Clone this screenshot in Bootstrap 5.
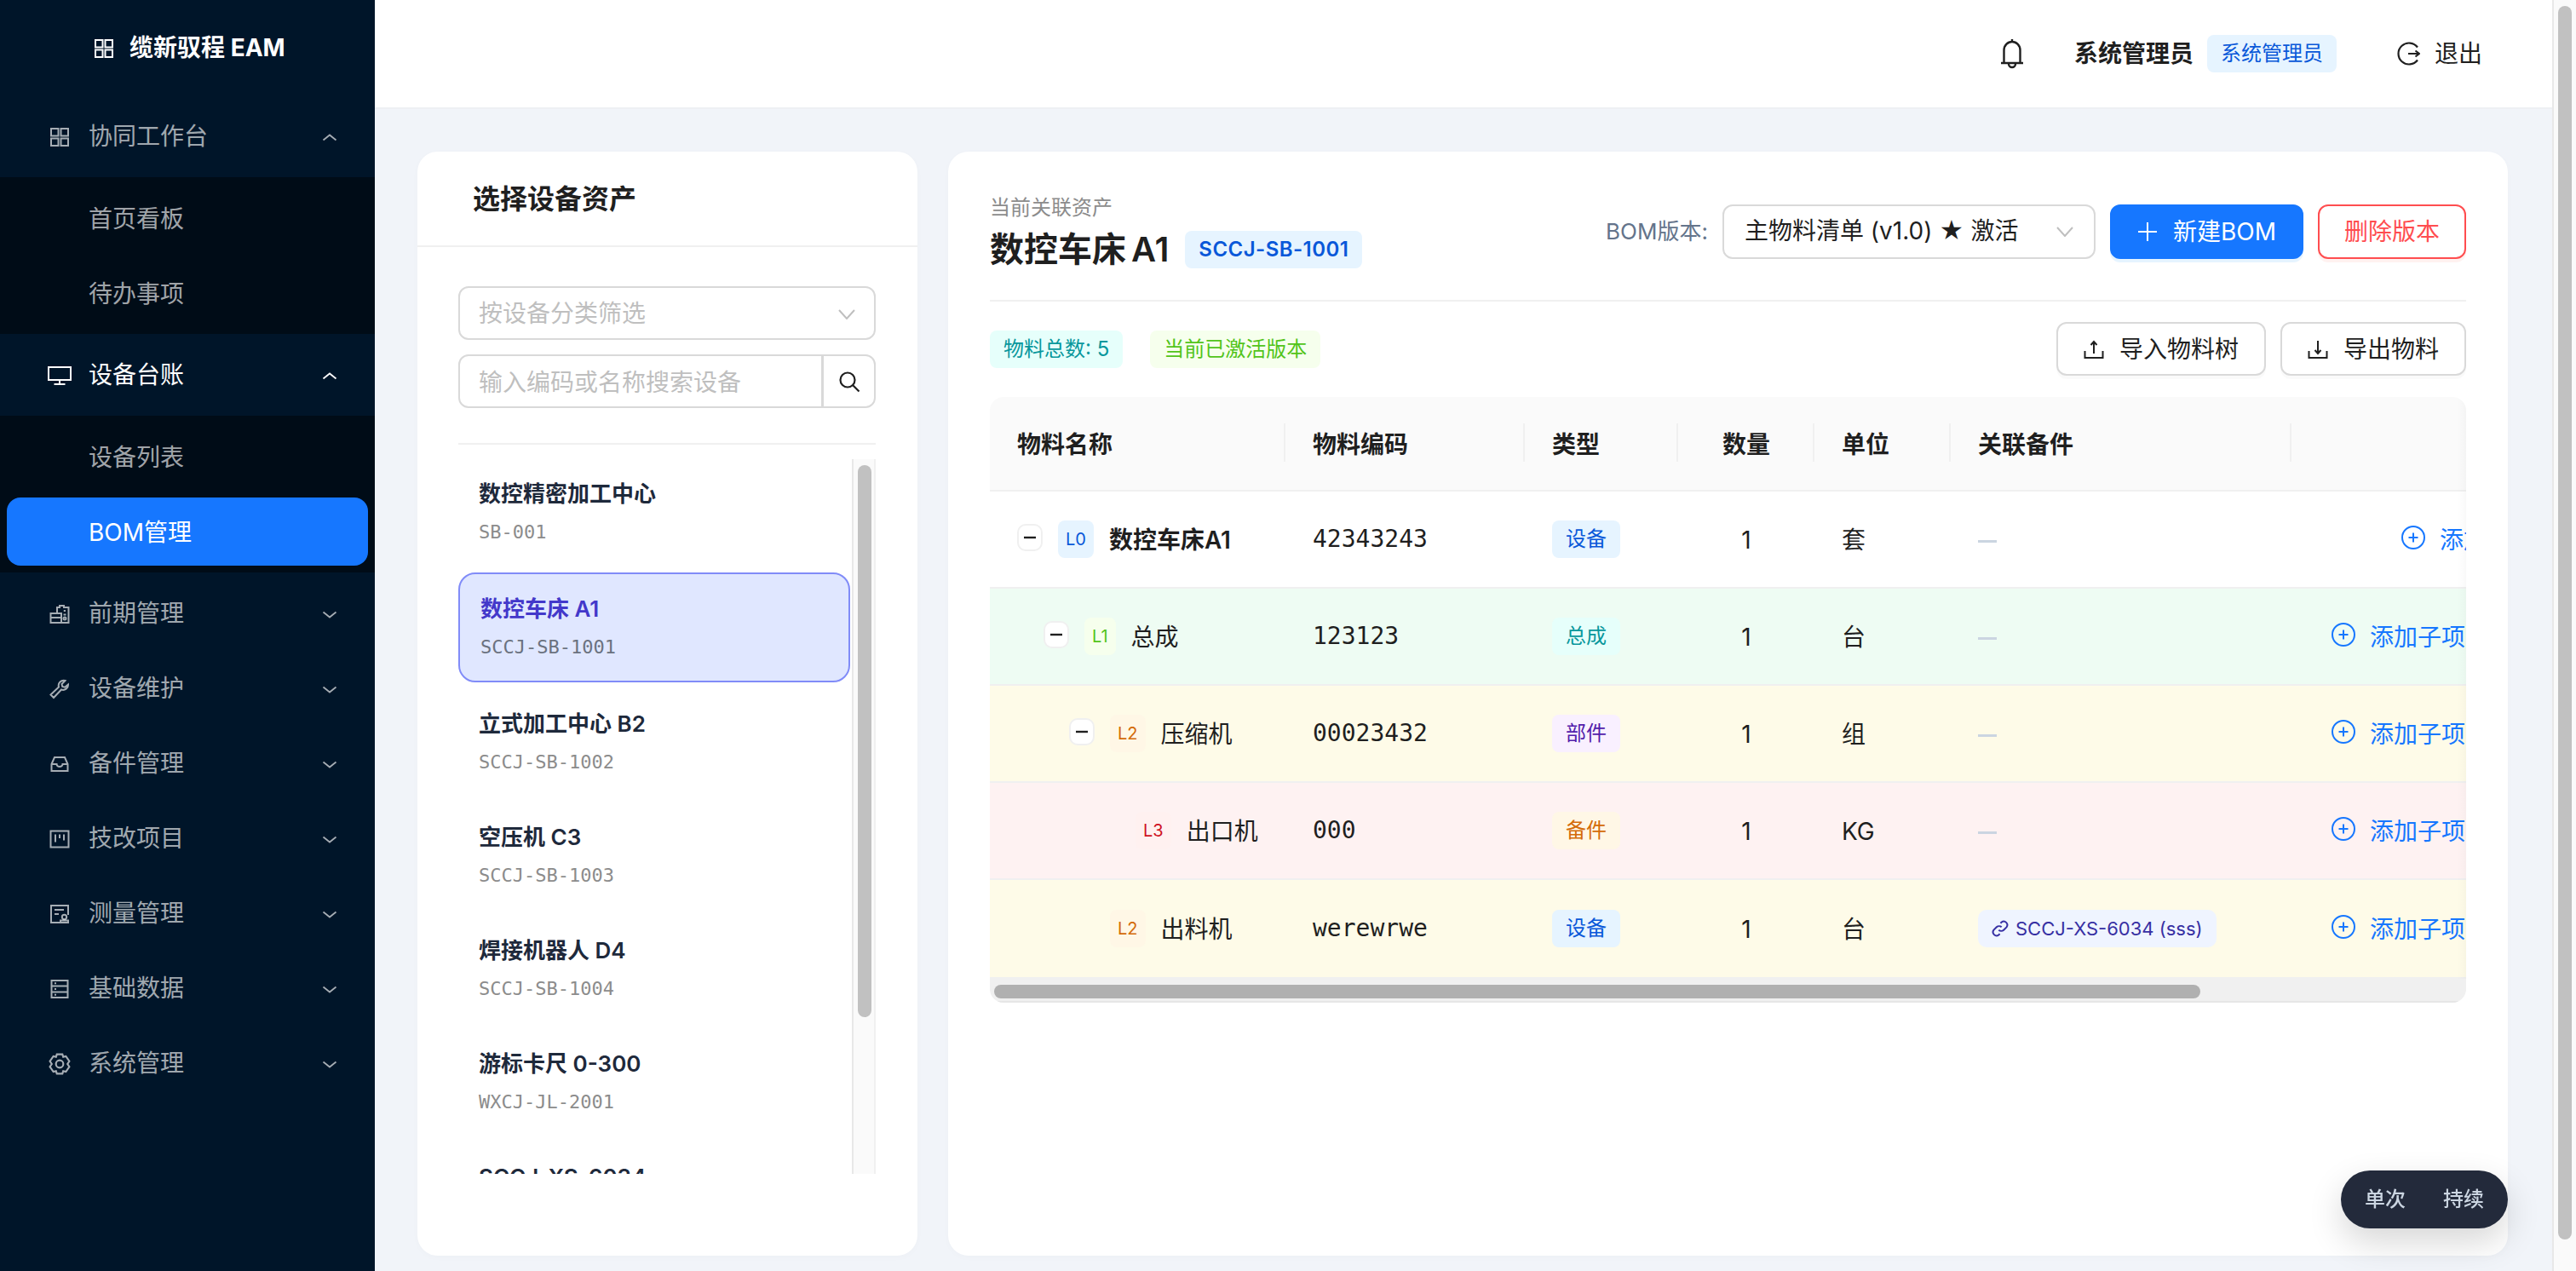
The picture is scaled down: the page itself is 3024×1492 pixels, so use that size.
<!DOCTYPE html>
<html lang="zh-CN">
<head>
<meta charset="utf-8">
<title>BOM管理</title>
<link href="https://cdn.jsdelivr.net/npm/bootstrap@5.3.0/dist/css/bootstrap.min.css" rel="stylesheet">
<style>
html{font-size:32px;overflow:hidden}
body{font-family:"Inter","Noto Sans CJK SC",sans-serif;font-size:28px;line-height:1.4;background:#f1f4f9;color:#1f1f1f;height:1492px;overflow:hidden}
svg{display:block;flex:none;fill:none;stroke:currentColor;stroke-width:2}
.app-shell{height:1492px}
.page-rail{width:28px;flex:none;background:#fafafa;border-left:2px solid #e8e8e8;padding:7px 5px 0 5px}
.page-thumb{height:1448px;background:#c1c1c1;border-radius:8px}
.app-side{width:440px;flex:none;background:#001529;color:rgba(255,255,255,.65)}
.side-logo{height:112px;padding:2px 0 0 110px;color:#fff;font-weight:700;gap:18px}
.side-title{height:80px;margin-top:8px;padding:2px 44px 0 58px;gap:22px}
.side-title.is-open{margin-bottom:8px}
.side-title.is-cur{color:#fff}
.side-title .side-ico{width:24px;display:flex;justify-content:center}
.side-sub{background:#000c17;padding-bottom:8px;display:flow-root}
.side-sub-item{height:80px;margin:8px 8px 0;padding:3px 0 0 96px;border-radius:16px}
.side-sub-item.is-active{background:#1677ff;color:#fff}
.side-chev{margin-left:auto}
.page-main{min-width:0}
.top-bar{height:128px;background:#fff;border-bottom:2px solid #eef0f3;padding-right:82px}
.user-name{font-weight:600;margin:0 16px 0 59px;padding-top:2px}
.soft-tag{display:inline-flex;align-items:center;height:44px;padding:0 16px;border-radius:8px;font-size:24px;line-height:1;white-space:nowrap}
.tone-blue{background:#e6f4ff;color:#0958d9}
.tone-cyan{background:#e6fffb;color:#08979c}
.tone-green{background:#f6ffed;color:#52c41a}
.tone-purple{background:#f9f0ff;color:#531dab}
.tone-orange{background:#fff7e6;color:#d46b08}
.tone-red{background:#fff1f0;color:#cf1322}
.logout-box{margin-left:70px;gap:17px}
.logout-box span{padding-top:2px}
.work-area{padding:50px 52px 0 50px;gap:36px}
.white-panel{background:#fff;border-radius:24px;height:1296px;box-shadow:0 2px 8px rgba(15,23,42,.02)}
.left-panel{width:587px;flex:none}
.left-head{height:112px;padding:3px 0 0 65px;border-bottom:2px solid #f0f0f0;font-size:32px;font-weight:600}
.left-body{padding:46px 49px 0 48px}
.pick-box,.left-body .form-control{height:63px;border:2px solid #d9d9d9;border-radius:12px;font-size:28px;padding:2px 22px 0;color:#bfbfbf;box-shadow:none}
.left-body .form-control::placeholder{color:#bfbfbf}
.search-row{margin-top:17px}
.search-row .btn{width:63px;height:63px;padding:0;border:2px solid #d9d9d9;border-radius:0 12px 12px 0;background:#fff;color:#1f1f1f;display:flex;align-items:center;justify-content:center}
.left-rule{height:2px;background:#f0f0f0;margin:41px 0 17px}
.asset-wrap{height:839px;overflow:hidden}
.asset-list{min-width:0;padding-right:2px}
.asset-rail{width:28px;flex:none;background:#fafafa;border-left:2px solid #e8e8e8;border-right:2px solid #f0f0f0;padding:7px 3px 0 5px}
.asset-thumb{height:648px;background:#c1c1c1;border-radius:8px}
.asset-item{padding:24px;margin-bottom:8px;border-radius:20px}
.asset-item.is-picked{background:#e0e7ff;border:2px solid #818cf8}
.asset-name{font-size:26px;line-height:34px;font-weight:600;color:#1e293b;white-space:nowrap}
.asset-code{font-family:"DejaVu Sans Mono",monospace;font-size:22px;line-height:31px;margin-top:12px;color:#8c8c8c;white-space:nowrap}
.is-picked .asset-name{color:#4338ca}
.is-picked .asset-code{color:#6b7280}
.right-panel{flex:1 1 0;min-width:0;padding:50px 49px 0 49px}
.asset-head{border-bottom:2px solid #f0f0f0;padding-bottom:36px}
.asset-cap{font-size:24px;line-height:32px;color:#8c8c8c}
.asset-line{margin-top:10px;gap:19px}
.asset-title{font-size:40px;line-height:46px;font-weight:600;margin:0;word-spacing:-4px}
.tag-strong{font-weight:600;letter-spacing:.45px}
.head-tools{gap:17px}
.bom-label{font-size:26px;color:#64748b}
.version-box{width:438px;height:64px;border:2px solid #d9d9d9;border-radius:12px;padding:0 24px;color:#1f1f1f}
.version-box svg{color:#bfbfbf;margin-left:auto}
.ant-action{height:64px;font-size:28px;line-height:1;border-radius:12px;padding:0 30px;display:inline-flex;align-items:center;gap:18px;white-space:nowrap;border-width:2px}
.act-main,.act-main:hover{background:#1677ff;border-color:#1677ff;color:#fff;box-shadow:0 4px 0 rgba(5,145,255,.1)}
.act-danger,.act-danger:hover{background:#fff;border-color:#ff4d4f;color:#ff4d4f;padding:0 29px;box-shadow:0 4px 0 rgba(255,38,5,.06)}
.act-plain,.act-plain:hover{background:#fff;border-color:#d9d9d9;color:#1f1f1f;height:63px;box-shadow:0 4px 0 rgba(0,0,0,.02)}
.stat-row{margin:24px 0 25px}
.stat-tags{gap:32px}
.bom-frame{position:relative;border-radius:16px;overflow:hidden}
.bom-frame::after{content:"";position:absolute;top:0;right:0;bottom:28px;width:10px;background:linear-gradient(to right,transparent,rgba(0,0,0,.025))}
.bom-scroll{overflow:hidden}
.bom-rail{height:28px;background:#f0f0f0;border-bottom:2px solid #e6e6e6;padding:7px 5px 0}
.bom-thumb{width:1416px;height:16px;background:#b0b0b0;border-radius:8px}
.bom-table{width:2133px;table-layout:fixed;margin:0;font-size:28px;--bs-table-color:#1f1f1f;--bs-table-border-color:#f0f0f0}
.bom-table>thead>tr>th{height:110px;background:#fafafa;padding:4px 32px 0;font-weight:600;vertical-align:middle;border-bottom:2px solid #f0f0f0;position:relative;white-space:nowrap}
.bom-table>thead>tr>th:not(:last-child)::after{content:"";position:absolute;right:0;top:31px;height:45px;width:2px;background:#f0f0f0}
.bom-table>tbody>tr>td{height:114px;padding:4px 32px 0;vertical-align:middle;border-bottom:2px solid #f0f0f0;white-space:nowrap}
.bom-table>tbody>tr:last-child>td{height:116px}
.bom-table>tbody>tr>td.code-text{padding-top:0}
.bom-table td>.soft-tag,.bom-table td>.link-chip{margin-bottom:4px}
.lvl-1{--bs-table-bg:#eefcf3}
.lvl-2{--bs-table-bg:#fefbe8}
.lvl-3{--bs-table-bg:#fef2f2}
.name-cell{display:flex;align-items:center}
.name-cell>.soft-tag{margin-bottom:4px}
.depth-1{padding-left:31px}
.depth-2{padding-left:61px}
.depth-3{padding-left:91px}
.fold-btn{width:30px;height:32px;flex:none;margin:0 18px 8px 0;background:#fff;border:2px solid #f0f0f0;border-radius:10px;display:flex;align-items:center;justify-content:center;padding:0;color:#1f1f1f}
.fold-gap{width:30px;flex:none;margin-right:18px}
.lvl-chip{height:44px;padding:0 9px;font-size:20px;border-radius:8px;margin-right:18px}
.code-text{font-family:"DejaVu Sans Mono",monospace}
.root-name{font-weight:600}
.no-link{display:block;width:22px;height:3px;background:#cbd5e1}
.link-chip{display:inline-flex;align-items:center;gap:8px;height:44px;padding:0 16px;background:#eff4ff;color:#3730a3;border-radius:10px;font-size:22px}
.add-sub{display:inline-flex;align-items:center;gap:17px;color:#1677ff;text-decoration:none;margin-left:15px;white-space:nowrap}
.add-sub svg{margin-bottom:6px}
.add-sub.from-root{margin-left:97px}
.float-mode{position:fixed;left:2748px;top:1374px;width:196px;height:68px;border-radius:34px;background:#232a3b;color:#cbd5e1;font-size:24px;font-weight:500;justify-content:center;gap:44px;box-shadow:0 16px 40px rgba(0,0,0,.16)}
</style>
</head>
<body>
<svg width="0" height="0" class="position-absolute">
  <symbol id="i-grid" viewBox="0 0 24 24"><path d="M2 2h8.500v8.500H2zM13.500 2H22v8.500h-8.500zM2 13.500h8.500V22H2zM13.500 13.500H22V22h-8.500z"/></symbol>
  <symbol id="i-desk" viewBox="0 0 28 24"><path d="M1 2h26v15H1zM14 17v5M7.500 22h13"/></symbol>
  <symbol id="i-recon" viewBox="0 0 24 24"><path d="M9 11V4h3V2h5v2h5.500v18H1.500V11zM1.500 16H14M9 11h5v11M16.800 8h2.200M16.500 12.500h3"/><circle cx="18" cy="17" r="1.500"/></symbol>
  <symbol id="i-tool" viewBox="0 0 24 24"><path d="M22 6.500a6 6 0 0 1-8 6L5 22l-3.500-3.500 9.500-9a6 6 0 0 1 7.500-7.500l-4 4 .7 3 3 .7z"/></symbol>
  <symbol id="i-box" viewBox="0 0 24 24"><path d="M2.500 12 6 4h12l3.500 8v8h-19zM2.500 12h6a3.500 3 0 0 0 7 0h6"/></symbol>
  <symbol id="i-board" viewBox="0 0 24 24"><path d="M1.500 2.500h21v19h-21zM7 6.500v9M12 6.500v4.500M17 6.500v7"/></symbol>
  <symbol id="i-person" viewBox="0 0 24 24"><path d="M12 22H2V2h20v11M6 7h11M6 12h5M13 22v-2.500h9V22z"/><circle cx="17.500" cy="15.500" r="2.700"/></symbol>
  <symbol id="i-db" viewBox="0 0 24 24"><path d="M2.500 2h19v20h-19zM2.500 8.500h19M2.500 15.500h19M6 5.300h2M6 12h2M6 18.800h2"/></symbol>
  <symbol id="i-gear" viewBox="0 0 24 24"><path d="M9 1.500h6l.9 2.800 2.900-.7L22.500 9l-2 3 2 3-3.700 5.400-2.900-.7-.9 2.800H9l-.9-2.800-2.900.7L1.500 15l2-3-2-3 3.700-5.400 2.900.7z"/><circle cx="12" cy="12" r="4"/></symbol>
  <symbol id="i-up" viewBox="0 0 24 12"><path d="M2 10l10-8 10 8" stroke-width="2.400"/></symbol>
  <symbol id="i-down" viewBox="0 0 24 12"><path d="M2 2l10 8 10-8" stroke-width="2.400"/></symbol>
  <symbol id="i-plus-ring" viewBox="0 0 28 28"><circle cx="14" cy="14" r="13"/><path d="M14 8.500v11M8.500 14h11"/></symbol>
  <symbol id="i-minus" viewBox="0 0 16 4"><path d="M1 2h14" stroke-width="2.400"/></symbol>
  <symbol id="i-export" viewBox="0 0 24 22"><path d="M12 16V2M8.500 6 12 2l3.500 4M1.500 13v8h21v-8"/></symbol>
  <symbol id="i-import" viewBox="0 0 24 22"><path d="M12 1v15M8.500 12l3.500 4 3.500-4M1.500 13v8h21v-8"/></symbol>
</svg>

<div class="app-shell d-flex">
  <aside class="app-side">
    <div class="side-logo d-flex align-items-center"><svg width="24" height="24"><use href="#i-grid"/></svg><span>缆新驭程 EAM</span></div>
    <nav>
      <div class="side-title is-open d-flex align-items-center"><span class="side-ico"><svg width="24" height="24"><use href="#i-grid"/></svg></span><span>协同工作台</span><svg class="side-chev" width="18" height="9"><use href="#i-up"/></svg></div>
      <div class="side-sub">
        <div class="side-sub-item d-flex align-items-center">首页看板</div>
        <div class="side-sub-item d-flex align-items-center">待办事项</div>
      </div>
      <div class="side-title is-open is-cur d-flex align-items-center"><span class="side-ico"><svg width="28" height="24"><use href="#i-desk"/></svg></span><span>设备台账</span><svg class="side-chev" width="18" height="9"><use href="#i-up"/></svg></div>
      <div class="side-sub">
        <div class="side-sub-item d-flex align-items-center">设备列表</div>
        <div class="side-sub-item is-active d-flex align-items-center">BOM管理</div>
      </div>
      <div class="side-title d-flex align-items-center"><span class="side-ico"><svg width="24" height="24"><use href="#i-recon"/></svg></span><span>前期管理</span><svg class="side-chev" width="18" height="9"><use href="#i-down"/></svg></div>
      <div class="side-title d-flex align-items-center"><span class="side-ico"><svg width="24" height="24"><use href="#i-tool"/></svg></span><span>设备维护</span><svg class="side-chev" width="18" height="9"><use href="#i-down"/></svg></div>
      <div class="side-title d-flex align-items-center"><span class="side-ico"><svg width="24" height="24"><use href="#i-box"/></svg></span><span>备件管理</span><svg class="side-chev" width="18" height="9"><use href="#i-down"/></svg></div>
      <div class="side-title d-flex align-items-center"><span class="side-ico"><svg width="24" height="24"><use href="#i-board"/></svg></span><span>技改项目</span><svg class="side-chev" width="18" height="9"><use href="#i-down"/></svg></div>
      <div class="side-title d-flex align-items-center"><span class="side-ico"><svg width="24" height="24"><use href="#i-person"/></svg></span><span>测量管理</span><svg class="side-chev" width="18" height="9"><use href="#i-down"/></svg></div>
      <div class="side-title d-flex align-items-center"><span class="side-ico"><svg width="24" height="24"><use href="#i-db"/></svg></span><span>基础数据</span><svg class="side-chev" width="18" height="9"><use href="#i-down"/></svg></div>
      <div class="side-title d-flex align-items-center"><span class="side-ico"><svg width="26" height="26"><use href="#i-gear"/></svg></span><span>系统管理</span><svg class="side-chev" width="18" height="9"><use href="#i-down"/></svg></div>
    </nav>
  </aside>

  <div class="page-main flex-grow-1">
    <header class="top-bar d-flex align-items-center justify-content-end">
      <svg width="28" height="36" viewBox="0 0 28 36"><path d="M14 1v3M4.500 29V14a9.500 10 0 0 1 19 0v15M1 29h26" stroke-width="2.400"/><path d="M10 30a4 4 0 0 0 8 0" stroke-width="2.400"/></svg>
      <span class="user-name">系统管理员</span>
      <span class="soft-tag tone-blue">系统管理员</span>
      <span class="logout-box d-flex align-items-center">
        <svg width="28" height="28" viewBox="0 0 28 28"><path d="M25 6.500A12.500 12.500 0 1 0 25 21.500M14 14h13M22.500 10.500 27 14l-4.500 3.500" stroke-width="2.200"/></svg>
        <span>退出</span>
      </span>
    </header>

    <main class="work-area d-flex">
      <section class="white-panel left-panel">
        <div class="left-head d-flex align-items-center">选择设备资产</div>
        <div class="left-body">
          <div class="pick-box d-flex align-items-center justify-content-between">按设备分类筛选
            <svg width="20" height="12" viewBox="0 0 20 12"><path d="M1 1l9 10 9-10"/></svg>
          </div>
          <div class="input-group search-row">
            <input class="form-control" type="text" placeholder="输入编码或名称搜索设备">
            <button class="btn" type="button" aria-label="搜索"><svg width="26" height="26" viewBox="0 0 26 26"><circle cx="11" cy="11" r="8.500" stroke-width="2.200"/><path d="M17 17l7.500 7.500" stroke-width="2.200"/></svg></button>
          </div>
          <div class="left-rule"></div>
          <div class="asset-wrap d-flex">
            <div class="asset-list flex-grow-1">
              <div class="asset-item"><div class="asset-name">数控精密加工中心</div><div class="asset-code">SB-001</div></div>
              <div class="asset-item is-picked"><div class="asset-name">数控车床 A1</div><div class="asset-code">SCCJ-SB-1001</div></div>
              <div class="asset-item"><div class="asset-name">立式加工中心 B2</div><div class="asset-code">SCCJ-SB-1002</div></div>
              <div class="asset-item"><div class="asset-name">空压机 C3</div><div class="asset-code">SCCJ-SB-1003</div></div>
              <div class="asset-item"><div class="asset-name">焊接机器人 D4</div><div class="asset-code">SCCJ-SB-1004</div></div>
              <div class="asset-item"><div class="asset-name">游标卡尺 0-300</div><div class="asset-code">WXCJ-JL-2001</div></div>
              <div class="asset-item"><div class="asset-name">SCCJ-XS-6034</div></div>
            </div>
            <div class="asset-rail"><div class="asset-thumb"></div></div>
          </div>
        </div>
      </section>

      <section class="white-panel right-panel">
        <div class="asset-head d-flex justify-content-between align-items-center">
          <div>
            <div class="asset-cap">当前关联资产</div>
            <div class="asset-line d-flex align-items-center">
              <h1 class="asset-title">数控车床 A1</h1>
              <span class="soft-tag tone-blue tag-strong">SCCJ-SB-1001</span>
            </div>
          </div>
          <div class="head-tools d-flex align-items-center">
            <span class="bom-label">BOM版本:</span>
            <div class="version-box d-flex align-items-center"><span>主物料清单 (v1.0) ★ 激活</span><svg width="20" height="12" viewBox="0 0 20 12"><path d="M1 1l9 10 9-10"/></svg></div>
            <button class="btn ant-action act-main" type="button"><svg width="24" height="24" viewBox="0 0 24 24"><path d="M12 1v22M1 12h22"/></svg>新建BOM</button>
            <button class="btn ant-action act-danger" type="button">删除版本</button>
          </div>
        </div>

        <div class="stat-row d-flex justify-content-between align-items-center">
          <div class="stat-tags d-flex">
            <span class="soft-tag tone-cyan">物料总数: 5</span>
            <span class="soft-tag tone-green">当前已激活版本</span>
          </div>
          <div class="head-tools d-flex">
            <button class="btn ant-action act-plain" type="button"><svg width="24" height="22"><use href="#i-export"/></svg>导入物料树</button>
            <button class="btn ant-action act-plain" type="button"><svg width="24" height="22"><use href="#i-import"/></svg>导出物料</button>
          </div>
        </div>

        <div class="bom-frame">
          <div class="bom-scroll">
            <table class="table bom-table">
              <colgroup><col width="347"><col width="281"><col width="180"><col width="160"><col width="160"><col width="400"><col width="605"></colgroup>
              <thead>
                <tr><th>物料名称</th><th>物料编码</th><th>类型</th><th class="text-center">数量</th><th>单位</th><th>关联备件</th><th></th></tr>
              </thead>
              <tbody>
                <tr>
                  <td><div class="name-cell"><button class="fold-btn" type="button" aria-label="收起"><svg width="16" height="4"><use href="#i-minus"/></svg></button><span class="soft-tag tone-blue lvl-chip">L0</span><span class="root-name">数控车床A1</span></div></td>
                  <td class="code-text">42343243</td><td><span class="soft-tag tone-blue">设备</span></td><td class="text-center">1</td><td>套</td><td><span class="no-link"></span></td>
                  <td><a class="add-sub from-root" href="#"><svg width="28" height="28"><use href="#i-plus-ring"/></svg>添加子项</a></td>
                </tr>
                <tr class="lvl-1">
                  <td><div class="name-cell depth-1"><button class="fold-btn" type="button" aria-label="收起"><svg width="16" height="4"><use href="#i-minus"/></svg></button><span class="soft-tag tone-green lvl-chip">L1</span><span>总成</span></div></td>
                  <td class="code-text">123123</td><td><span class="soft-tag tone-cyan">总成</span></td><td class="text-center">1</td><td>台</td><td><span class="no-link"></span></td>
                  <td><a class="add-sub" href="#"><svg width="28" height="28"><use href="#i-plus-ring"/></svg>添加子项</a></td>
                </tr>
                <tr class="lvl-2">
                  <td><div class="name-cell depth-2"><button class="fold-btn" type="button" aria-label="收起"><svg width="16" height="4"><use href="#i-minus"/></svg></button><span class="soft-tag tone-orange lvl-chip">L2</span><span>压缩机</span></div></td>
                  <td class="code-text">00023432</td><td><span class="soft-tag tone-purple">部件</span></td><td class="text-center">1</td><td>组</td><td><span class="no-link"></span></td>
                  <td><a class="add-sub" href="#"><svg width="28" height="28"><use href="#i-plus-ring"/></svg>添加子项</a></td>
                </tr>
                <tr class="lvl-3">
                  <td><div class="name-cell depth-3"><span class="fold-gap"></span><span class="soft-tag tone-red lvl-chip">L3</span><span>出口机</span></div></td>
                  <td class="code-text">000</td><td><span class="soft-tag tone-orange">备件</span></td><td class="text-center">1</td><td>KG</td><td><span class="no-link"></span></td>
                  <td><a class="add-sub" href="#"><svg width="28" height="28"><use href="#i-plus-ring"/></svg>添加子项</a></td>
                </tr>
                <tr class="lvl-2">
                  <td><div class="name-cell depth-2"><span class="fold-gap"></span><span class="soft-tag tone-orange lvl-chip">L2</span><span>出料机</span></div></td>
                  <td class="code-text">werewrwe</td><td><span class="soft-tag tone-blue">设备</span></td><td class="text-center">1</td><td>台</td>
                  <td><span class="link-chip"><svg width="20" height="20" viewBox="0 0 24 24"><path d="M10 14a5 5 0 0 0 7 0l4-4a5 5 0 0 0-7-7l-1.500 1.500M14 10a5 5 0 0 0-7 0l-4 4a5 5 0 0 0 7 7l1.500-1.500" stroke-width="2.400"/></svg>SCCJ-XS-6034 (sss)</span></td>
                  <td><a class="add-sub" href="#"><svg width="28" height="28"><use href="#i-plus-ring"/></svg>添加子项</a></td>
                </tr>
              </tbody>
            </table>
          </div>
          <div class="bom-rail"><div class="bom-thumb"></div></div>
        </div>
      </section>
    </main>
  </div>
  <div class="page-rail"><div class="page-thumb"></div></div>
</div>

<div class="float-mode d-flex align-items-center"><span>单次</span><span>持续</span></div>
<script src="https://cdn.jsdelivr.net/npm/bootstrap@5.3.0/dist/js/bootstrap.bundle.min.js"></script>
</body>
</html>
